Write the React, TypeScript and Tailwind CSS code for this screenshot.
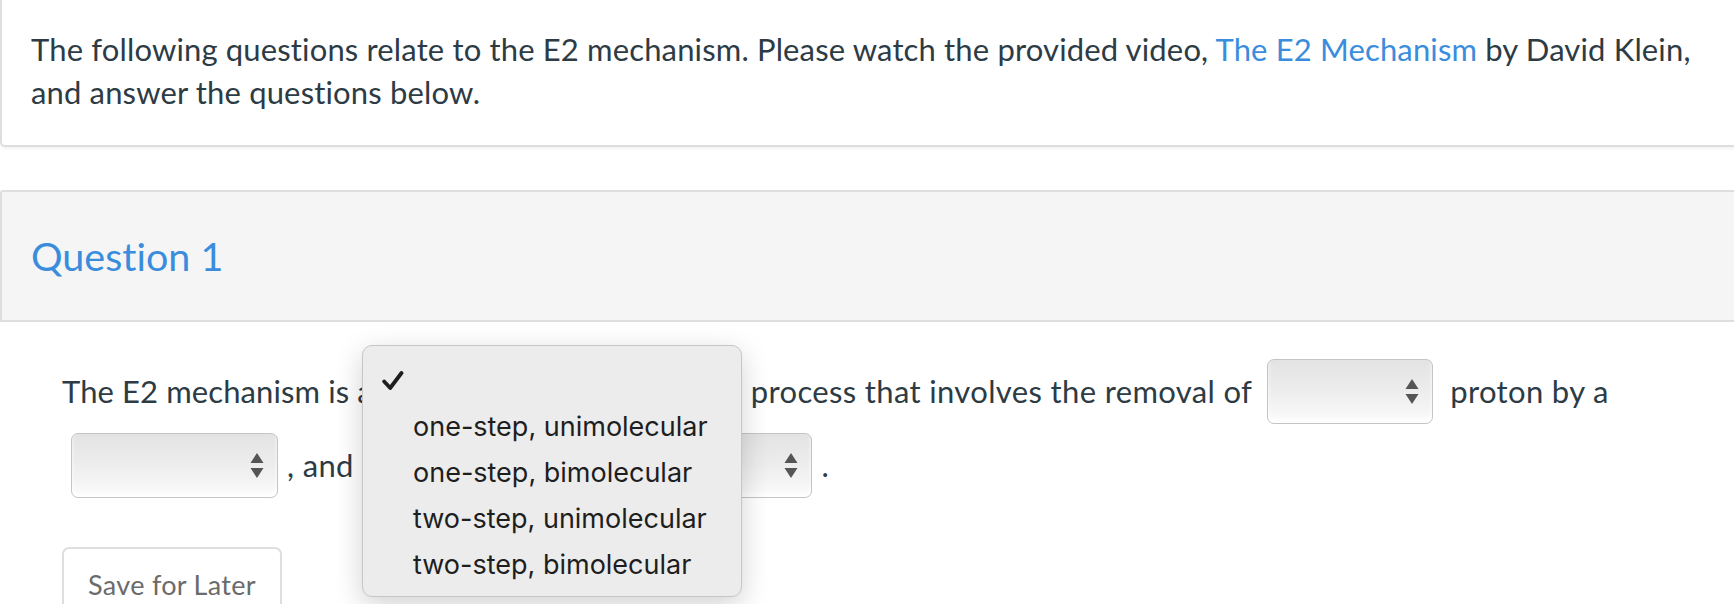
import React from "react";

const lato = { fontFamily: "Lato, 'Open Sans', sans-serif" };

function SelectBox({ width, className = "" }: { width: string; className?: string }) {
  return (
    <div
      className={`relative h-[65px] shrink-0 rounded-[7px] border border-[#c4c4c4] bg-gradient-to-b from-[#e3e3e3] via-[#ededed] to-[#fbfbfb] shadow-[inset_0_-4px_4px_rgba(255,255,255,0.9)] ${width} ${className}`}
    >
      <svg
        className="absolute right-[13px] top-1/2 -translate-y-1/2"
        width="14"
        height="26"
        viewBox="0 0 14 26"
      >
        <path d="M7 0 L13.5 10 L0.5 10 Z" fill="#555" />
        <path d="M0.5 15 L13.5 15 L7 25 Z" fill="#555" />
      </svg>
    </div>
  );
}

const options = [
  "one-step, unimolecular",
  "one-step, bimolecular",
  "two-step, unimolecular",
  "two-step, bimolecular",
];

export default function App() {
  return (
    <div
      className="relative h-[604px] w-full overflow-hidden bg-white text-[#2d3b45] [font-variant-ligatures:none]"
      style={lato}
    >
      {/* intro card */}
      <div className="mr-[-10px] rounded-b-[5px] border-x-2 border-b-2 border-[#dedede] bg-white px-[29px] pb-[31px] pt-[28px] shadow-[0_2px_3px_rgba(0,0,0,0.05)]">
        <p className="text-[31px] leading-[43px] tracking-[0.15px]">
          The following questions relate to the E2 mechanism. Please watch the provided video,{" "}
          <a className="text-[#3a8ddd]">The E2 Mechanism</a> by David Klein,
          <br />
          and answer the questions below.
        </p>
      </div>

      {/* question */}
      <div className="mr-[-10px] mt-[43px] rounded-tl-[3px] border-y-2 border-l-2 border-[#dedede]">
        <div className="bg-[#f5f5f5] px-[29px] pb-10 pt-[40px]">
          <h2 className="text-[39.5px] leading-[48px] text-[#3a8ddd]">Question 1</h2>
        </div>
      </div>

      <div className="px-[62px] pt-[37px] text-[31px] tracking-[0.35px]">
        <div className="flex items-center whitespace-nowrap">
          <span className="tracking-[0.1px]">The E2 mechanism is a</span>
          <SelectBox width="w-[356px]" className="ml-[10px] mr-[12px]" />
          <span>process that involves the removal of</span>
          <SelectBox width="w-[166px]" className="ml-[15px] mr-[17px]" />
          <span>proton by a</span>
        </div>
        <div className="mt-[9px] flex items-center whitespace-nowrap">
          <SelectBox width="w-[207px]" className="ml-[9px]" />
          <span className="ml-[9px]">, and the reaction is</span>
          <SelectBox width="w-[240px]" className="ml-[12px] mr-[10px]" />
          <span>.</span>
        </div>
        <button
          className="mt-[49px] h-[76px] w-[220px] rounded-[7px] border-2 border-[#dedede] bg-white text-[27px] tracking-[0.3px] text-[#6b6b6b]"
          style={lato}
        >
          Save for Later
        </button>
      </div>

      {/* open dropdown menu */}
      <div
        className="absolute left-[362px] top-[345px] w-[380px] rounded-[10px] border border-[#c6c6c6] bg-[#ececec] pb-[8px] pt-[12px] text-[27px] tracking-normal text-[#1e1e1e] shadow-[0_8px_28px_rgba(0,0,0,0.18)]"
        style={{ fontFamily: "Inter, 'Noto Sans', sans-serif" }}
      >
        <div className="flex h-[46px] items-center pl-[19px]">
          <svg width="22" height="20" viewBox="0 0 22 20">
            <path
              d="M2.2 10.5 L8.2 17 L19.5 2"
              fill="none"
              stroke="#1e1e1e"
              strokeWidth="3.8"
              strokeLinecap="round"
              strokeLinejoin="round"
            />
          </svg>
        </div>
        {options.map((o) => (
          <div key={o} className="flex h-[46px] items-center pl-[50px]">
            {o}
          </div>
        ))}
      </div>
    </div>
  );
}
